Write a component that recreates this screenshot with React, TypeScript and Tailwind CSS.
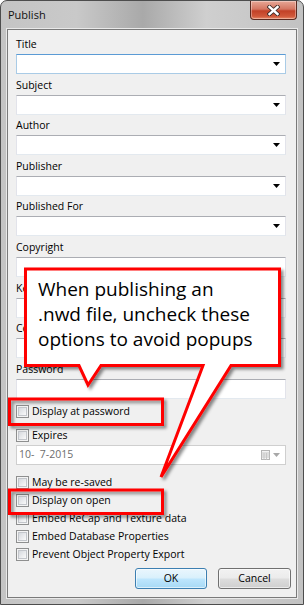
import React from "react";

const uiFont = { fontFamily: '"Open Sans", "Noto Sans", sans-serif' };

const fields = [
  { label: "Title", combo: true, focused: true },
  { label: "Subject", combo: true },
  { label: "Author", combo: true },
  { label: "Publisher", combo: true },
  { label: "Published For", combo: true },
  { label: "Copyright" },
  { label: "Keywords" },
  { label: "Comments" },
  { label: "Password" },
];

function DropArrow({ muted = false }: { muted?: boolean }) {
  return (
    <svg width="7" height="4" viewBox="0 0 7 4" className="shrink-0">
      <path d="M0 0 H7 L3.5 4 Z" fill={muted ? "#a8a8a8" : "#000"} />
    </svg>
  );
}

function Field({
  label,
  combo,
  focused,
}: {
  label: string;
  combo?: boolean;
  focused?: boolean;
}) {
  const border = focused
    ? "border border-[#a9cbe6] border-t-[#5b9bd5]"
    : "border border-[#e2e3ea] border-t-[#abadb3] border-b-[#e3e9ef]";
  return (
    <div className="mb-[3.6px]">
      <div className="ml-[8px] h-[15px] text-[10.5px] leading-[15px] text-black">
        {label}
      </div>
      <div
        className={`mt-[2px] ml-[8px] mr-[10px] flex h-[20px] items-center justify-end bg-white pr-[5px] ${border}`}
      >
        {combo && <DropArrow />}
      </div>
    </div>
  );
}

function Check({ label, className = "" }: { label: string; className?: string }) {
  return (
    <div className={`ml-[8px] flex h-[18px] items-center ${className}`}>
      <div className="flex h-[13px] w-[13px] items-center justify-center border border-[#8e8f8f] bg-[#f4f4f4]">
        <div className="h-[9px] w-[9px] border border-[#c3c6cb] bg-gradient-to-br from-[#d6d9de] to-[#fafafa]" />
      </div>
      <span className="ml-[3px] text-[10.5px] leading-none text-black">{label}</span>
    </div>
  );
}

function Callouts() {
  return (
    <svg
      className="pointer-events-none absolute left-0 top-0"
      width="304"
      height="605"
      viewBox="0 0 304 605"
    >
      <defs>
        <filter id="sh" x="-10%" y="-10%" width="130%" height="130%">
          <feDropShadow dx="2.5" dy="2.5" stdDeviation="1.6" floodColor="#000" floodOpacity="0.45" />
        </filter>
      </defs>
      <g filter="url(#sh)" stroke="#ff0000" strokeWidth="3" strokeLinejoin="miter">
        <rect x="8.5" y="398" width="153" height="25.5" fill="none" />
        <rect x="8.5" y="489" width="153" height="23.5" fill="none" />
        <path
          d="M24.5 268 H278.5 V364.5 H230 L160 476 L202 364.5 H100 L87 384 L78 364.5 H24.5 Z"
          fill="#fff"
        />
      </g>
    </svg>
  );
}

export default function App() {
  return (
    <div
      className="relative flex h-[605px] w-[304px] flex-col overflow-hidden rounded-t-[7px] border border-[#4d4d4d] bg-[linear-gradient(90deg,#c4c4c4_0%,#c9c9c9_25%,#a9a9a9_47%,#cfcfcf_68%,#c2c2c2_100%)]"
      style={uiFont}
    >
      <div className="flex h-[28px] shrink-0 items-start">
        <div className="mt-[6px] ml-[7px] text-[11px] leading-[15px] text-[#111]">Publish</div>
        <div className="ml-auto mr-[6px] flex h-[19px] w-[47px] items-center justify-center rounded-b-[4px] border border-t-0 border-[#5a2a20] bg-[linear-gradient(180deg,#e7a796_0%,#d47662_45%,#c24127_55%,#d0583a_85%,#e98a68_100%)] shadow-[inset_0_0_0_1px_rgba(255,255,255,0.35)]">
          <svg width="13" height="11" viewBox="0 0 13 11">
            <path d="M2.5 2 L10.5 9 M10.5 2 L2.5 9" stroke="#3b2a26" strokeWidth="4.2" strokeLinecap="square" />
            <path d="M2.5 2 L10.5 9 M10.5 2 L2.5 9" stroke="#fff" strokeWidth="2.4" strokeLinecap="square" />
          </svg>
        </div>
      </div>

      <div className="mx-[6px] mb-[6px] flex flex-1 flex-col border border-[#7a7a7a] bg-[#f0f0f0] pt-[7px] shadow-[0_0_0_1px_#e9e9e9]">
        {fields.map((f) => (
          <Field key={f.label} label={f.label} combo={f.combo} focused={f.focused} />
        ))}

        <Check label="Display at password" />
        <Check label="Expires" className="mt-[6px]" />

        <div className="mt-[1px] ml-[8px] mr-[10px] flex h-[20px] items-center border border-[#cfcfcf] bg-white pl-[2px] pr-[5px]">
          <span className="whitespace-pre text-[10.5px] text-[#6d6d6d]">10-  7-2015</span>
          <div className="ml-auto flex items-center gap-[3px]">
            <svg width="9" height="10" viewBox="0 0 9 10">
              <rect x="0.5" y="0.5" width="8" height="9" fill="#f4f4f4" stroke="#b5b5b5" />
              <path d="M0.5 3 H8.5 M0.5 5 H8.5 M0.5 7 H8.5 M3 3 V9.5 M5.5 3 V9.5" stroke="#c8c8c8" />
            </svg>
            <DropArrow muted />
          </div>
        </div>

        <Check label="May be re-saved" className="mt-[8px]" />
        <Check label="Display on open" />
        <Check label="Embed ReCap and Texture data" />
        <Check label="Embed Database Properties" />
        <Check label="Prevent Object Property Export" />

        <div className="mt-[5px] mr-[5px] flex justify-end gap-[11px]">
          <button className="flex h-[21px] w-[72px] items-center justify-center rounded-[3px] border border-[#3c7fb1] bg-[linear-gradient(180deg,#eaf6fd_0%,#d9f0fc_48%,#bee6fd_52%,#a7d9f5_100%)] text-[10.5px] text-black shadow-[inset_0_0_0_1px_rgba(255,255,255,0.6)]">
            OK
          </button>
          <button className="flex h-[21px] w-[73px] items-center justify-center rounded-[3px] border border-[#707070] bg-[linear-gradient(180deg,#f2f2f2_0%,#ebebeb_48%,#dddddd_52%,#cfcfcf_100%)] text-[10.5px] text-black shadow-[inset_0_0_0_1px_rgba(255,255,255,0.6)]">
            Cancel
          </button>
        </div>
      </div>

      <Callouts />
      <div className="pointer-events-none absolute left-[37px] top-[276px] text-[19px] leading-[25px] text-black">
        <div>When publishing an</div>
        <div>.nwd file, uncheck these</div>
        <div>options to avoid popups</div>
      </div>
    </div>
  );
}
